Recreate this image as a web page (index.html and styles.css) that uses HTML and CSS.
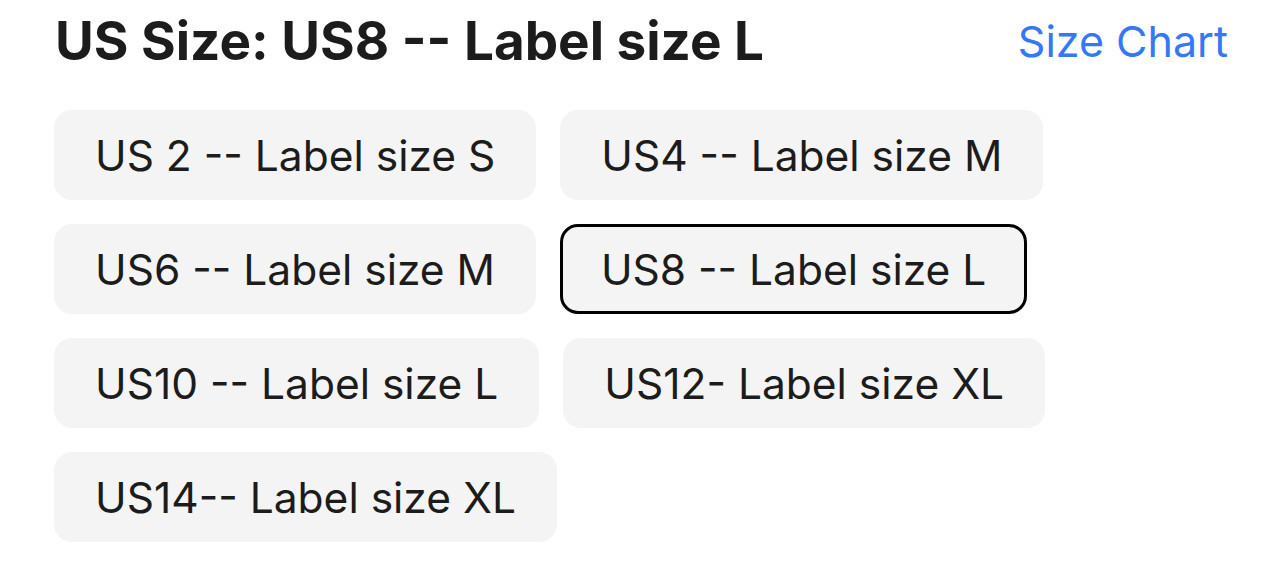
FILE: index.html
```html
<!DOCTYPE html>
<html>
<head>
<meta charset="utf-8">
<link rel="stylesheet" href="styles.css">
</head>
<body>
<div class="page">
  <div class="header">
    <h1 class="title">US Size: US8 -- Label size L</h1>
    <a class="chart">Size Chart</a>
  </div>
  <div class="options">
    <div class="opt">US 2 -- Label size S</div>
    <div class="opt">US4 -- Label size M</div>
    <div class="opt">US6 -- Label size M</div>
    <div class="opt selected">US8 -- Label size L</div>
    <div class="opt">US10 -- Label size L</div>
    <div class="opt">US12- Label size XL</div>
    <div class="opt">US14-- Label size XL</div>
  </div>
</div>
</body>
</html>
```
FILE: styles.css
```css
html, body { margin: 0; padding: 0; background: #fff; }
body { font-family: Inter, "Noto Sans", sans-serif; color: #1c1c1c; }
.page { padding: 8px 56px 0 54px; }
.header { display: flex; justify-content: space-between; align-items: center; height: 66px; }
.title { margin: 0; font-size: 53px; font-weight: 700; letter-spacing: 0; padding-left: 1px; line-height: 66px; }
.chart { font-size: 43px; color: #3478f6; line-height: 66px; }
.options { display: flex; flex-wrap: wrap; gap: 24px; margin-top: 36px; width: 1060px; }
.opt { height: 90px; box-sizing: border-box; padding: 0 38px; background: #f4f4f4; border-radius: 18px; display: flex; align-items: center; font-size: 42.5px; border: 3px solid transparent; }
.opt.selected { border-color: #000; }
```
